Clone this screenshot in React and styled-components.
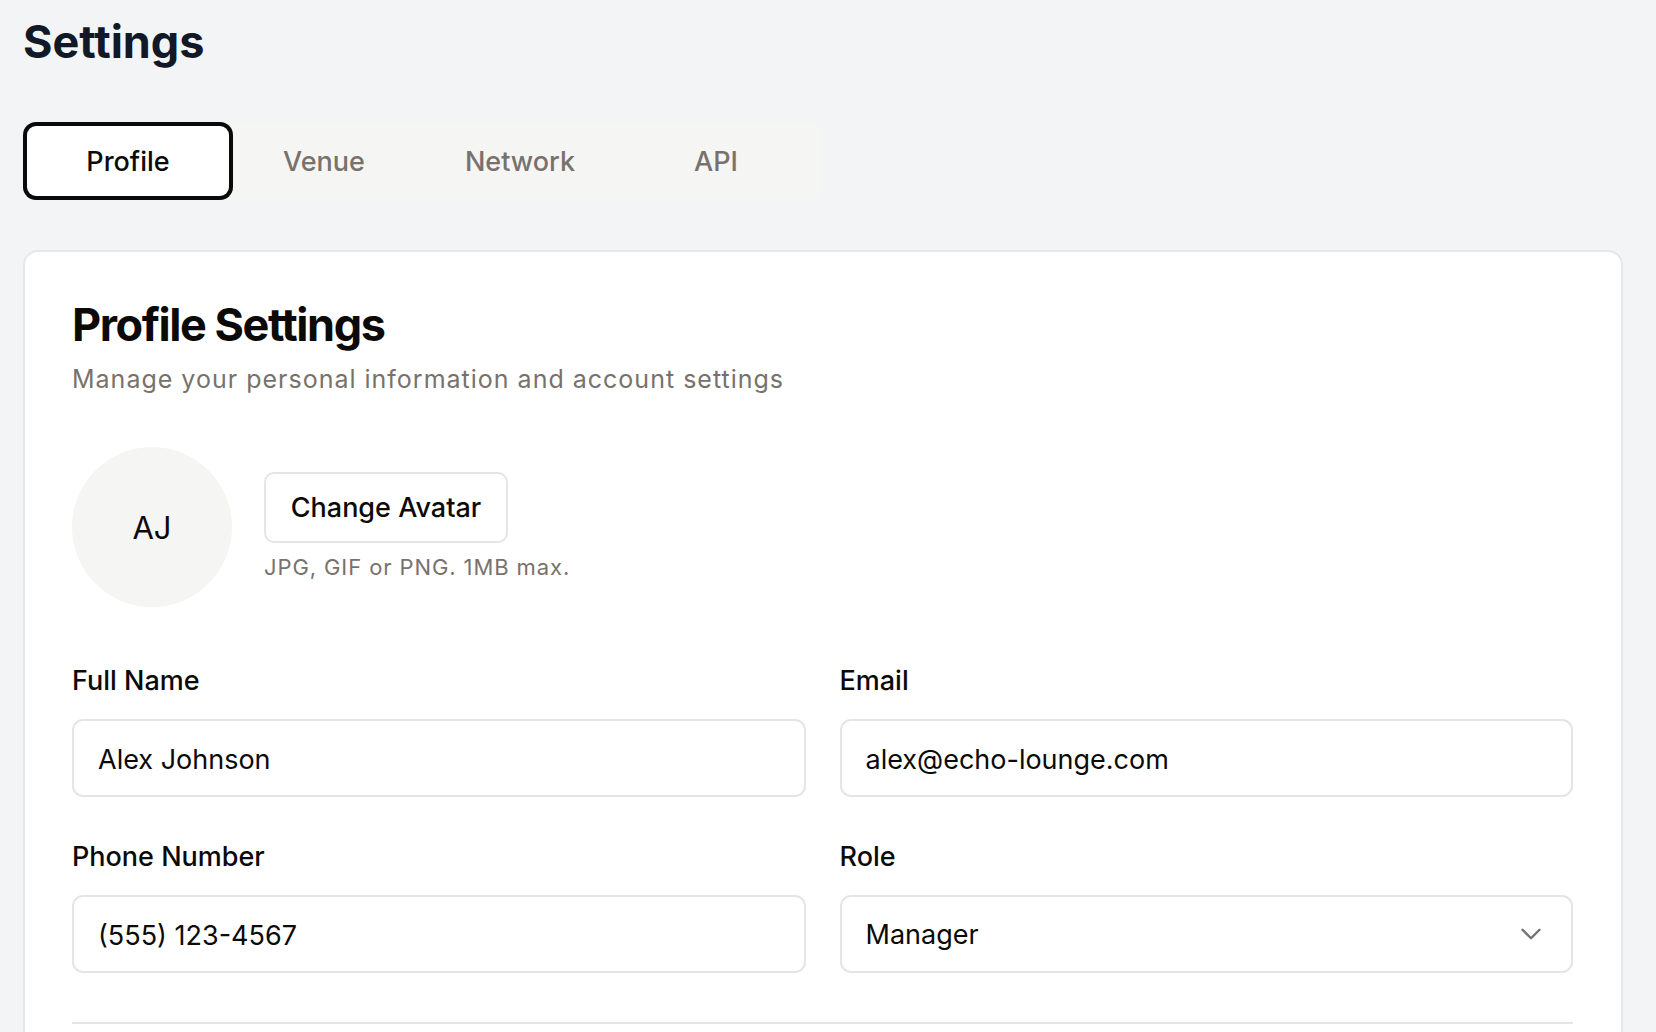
import React from 'react';
import styled, { createGlobalStyle } from 'styled-components';

const GlobalStyle = createGlobalStyle`
  * { box-sizing: border-box; }
  body {
    margin: 0;
    background: #f3f4f6;
    font-family: Inter, "Noto Sans", sans-serif;
    color: #0c0a09;
  }
`;

const Page = styled.div`
  padding: 15px 33px 0 23px;
  height: 1032px;
  overflow: hidden;
`;

const Title = styled.h1`
  margin: 0;
  font-size: 45px;
  line-height: 54px;
  font-weight: 700;
  color: #111827;
`;

const TabList = styled.div`
  margin-top: 53px;
  display: inline-grid;
  grid-template-columns: repeat(4, 196px);
  padding: 7px;
  background: #f5f5f4;
  border-radius: 10px;
`;

const Tab = styled.button`
  height: 64px;
  border: 0;
  border-radius: 6px;
  font-family: inherit;
  font-size: 27px;
  font-weight: 500;
  cursor: pointer;
  background: ${p => (p.$active ? '#ffffff' : 'transparent')};
  color: ${p => (p.$active ? '#0c0a09' : '#78716c')};
  box-shadow: ${p => (p.$active ? '0 0 0 3px #ffffff, 0 0 0 7px #0a0a0a' : 'none')};
`;

const Card = styled.section`
  margin-top: 50px;
  background: #ffffff;
  border: 2px solid #e9e7e5;
  border-radius: 15px;
  padding: 46px 48px 60px 47px;
`;

const CardTitle = styled.h2`
  margin: 0;
  font-size: 45px;
  line-height: 54px;
  font-weight: 700;
  letter-spacing: -1.45px;
  color: #0c0a09;
`;

const CardSub = styled.p`
  margin: 9px 0 0;
  font-size: 25px;
  line-height: 36px;
  letter-spacing: 1px;
  color: #78716c;
`;

const AvatarRow = styled.div`
  margin-top: 50px;
  display: flex;
  align-items: center;
  gap: 32px;
`;

const Avatar = styled.div`
  width: 160px;
  height: 160px;
  border-radius: 50%;
  background: #f5f5f4;
  display: flex;
  align-items: center;
  justify-content: center;
  font-size: 31px;
  color: #0c0a09;
`;

const AvatarSide = styled.div`
  display: flex;
  flex-direction: column;
  align-items: flex-start;
`;

const OutlineButton = styled.button`
  width: 244px;
  height: 71px;
  background: #ffffff;
  border: 2px solid #e7e5e4;
  border-radius: 10px;
  font-family: inherit;
  font-size: 27px;
  font-weight: 500;
  color: #0c0a09;
  cursor: pointer;
`;

const Hint = styled.span`
  margin-top: 9px;
  font-size: 22px;
  line-height: 30px;
  letter-spacing: 0.9px;
  color: #78716c;
`;

const FormGrid = styled.div`
  margin-top: 56px;
  display: grid;
  grid-template-columns: 1fr 1fr;
  column-gap: 34px;
  row-gap: 42px;
`;

const Field = styled.label`
  display: flex;
  flex-direction: column;
  gap: 20px;
`;

const Label = styled.span`
  font-size: 27px;
  line-height: 36px;
  font-weight: 500;
  color: #0c0a09;
`;

const Input = styled.input`
  height: 78px;
  width: 100%;
  border: 2px solid #e7e5e4;
  border-radius: 11px;
  padding: 3px 24px 0;
  font-family: inherit;
  font-size: 27px;
  color: #0c0a09;
  background: #ffffff;
  outline: none;
`;

const SelectBox = styled.div`
  height: 78px;
  border: 2px solid #e7e5e4;
  border-radius: 11px;
  padding: 0 23px 0 24px;
  display: flex;
  align-items: center;
  justify-content: space-between;
  font-size: 27px;
  color: #0c0a09;
  background: #ffffff;
`;

const Chevron = () => (
  <svg width="34" height="34" viewBox="0 0 24 24" fill="none" stroke="#737373" strokeWidth="1.7" strokeLinecap="round" strokeLinejoin="round">
    <path d="m6 9 6 6 6-6" />
  </svg>
);

const Divider = styled.hr`
  margin: 49px 0 0;
  border: 0;
  border-top: 2px solid #e7e5e4;
`;

const tabs = ['Profile', 'Venue', 'Network', 'API'];

export default function App() {
  return (
    <>
      <GlobalStyle />
      <Page>
        <Title>Settings</Title>
        <TabList>
          {tabs.map(t => (
            <Tab key={t} $active={t === 'Profile'}>{t}</Tab>
          ))}
        </TabList>
        <Card>
          <CardTitle>Profile Settings</CardTitle>
          <CardSub>Manage your personal information and account settings</CardSub>
          <AvatarRow>
            <Avatar>AJ</Avatar>
            <AvatarSide>
              <OutlineButton>Change Avatar</OutlineButton>
              <Hint>JPG, GIF or PNG. 1MB max.</Hint>
            </AvatarSide>
          </AvatarRow>
          <FormGrid>
            <Field>
              <Label>Full Name</Label>
              <Input defaultValue="Alex Johnson" />
            </Field>
            <Field>
              <Label>Email</Label>
              <Input defaultValue="alex@echo-lounge.com" />
            </Field>
            <Field>
              <Label>Phone Number</Label>
              <Input defaultValue="(555) 123-4567" />
            </Field>
            <Field as="div">
              <Label>Role</Label>
              <SelectBox>
                <span>Manager</span>
                <Chevron />
              </SelectBox>
            </Field>
          </FormGrid>
          <Divider />
        </Card>
      </Page>
    </>
  );
}
